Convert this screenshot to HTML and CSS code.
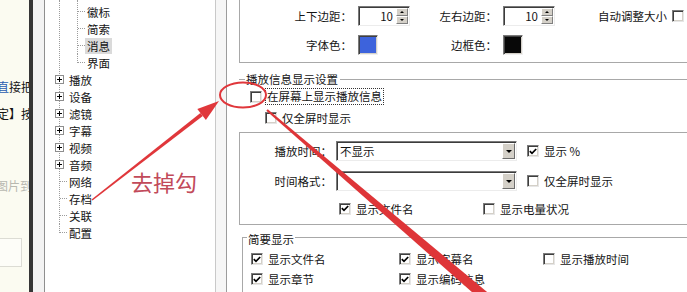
FILE: index.html
```html
<!DOCTYPE html>
<html>
    <head>
        <meta charset="utf-8">
        <title>播放信息显示设置</title>
        <link rel="stylesheet" href="styles.css">
    </head>
    <body>
        <div class="screen">
            <div class="doc-strip">
                <div class="doc-line"><span class="doc-blue">直</span>接把</div>
                <div class="doc-line">定】按</div>
                <div class="doc-line doc-faint">图片到</div>
                <div class="doc-input"></div>
            </div>
            <div class="dark-bar"></div>
            <div class="gutter"></div>

            <div class="tree">
                <div class="branch">
                    <div class="children">
                        <div class="tree-row"><span class="twig"></span><span class="node-label">徽标</span></div>
                        <div class="tree-row"><span class="twig"></span><span class="node-label">简索</span></div>
                        <div class="tree-row"><span class="twig"></span><span class="node-label selected">消息</span></div>
                    </div>
                    <div class="tree-row child is-last"><span class="twig"></span><span class="node-label">界面</span></div>
                    <div class="tree-row"><span class="plus"></span><span class="node-label">播放</span></div>
                    <div class="tree-row"><span class="plus"></span><span class="node-label">设备</span></div>
                    <div class="tree-row"><span class="plus"></span><span class="node-label">滤镜</span></div>
                    <div class="tree-row"><span class="plus"></span><span class="node-label">字幕</span></div>
                    <div class="tree-row"><span class="plus"></span><span class="node-label">视频</span></div>
                    <div class="tree-row"><span class="plus"></span><span class="node-label">音频</span></div>
                    <div class="tree-row"><span class="twig"></span><span class="node-label">网络</span></div>
                    <div class="tree-row"><span class="twig"></span><span class="node-label">存档</span></div>
                    <div class="tree-row"><span class="twig"></span><span class="node-label">关联</span></div>
                </div>
                <div class="tree-row top is-last"><span class="twig"></span><span class="node-label">配置</span></div>
            </div>

            <div class="splitter"></div>

            <div class="options">
                <div class="group group-margins">
                    <div class="margin-grid">
                        <span class="field-label">上下边距：</span>
                        <div class="spin">
                            <span class="spin-value">10</span>
                            <span class="spin-buttons"><span class="spin-up"></span><span class="spin-down"></span></span>
                        </div>
                        <span class="field-label">左右边距：</span>
                        <div class="spin">
                            <span class="spin-value">10</span>
                            <span class="spin-buttons"><span class="spin-up"></span><span class="spin-down"></span></span>
                        </div>
                        <div class="auto-size">自动调整大小<span class="check"></span></div>
                        <span class="field-label">字体色：</span>
                        <span class="swatch swatch-blue"></span>
                        <span class="field-label">边框色：</span>
                        <span class="swatch swatch-black"></span>
                    </div>
                </div>

                <div class="section-head">
                    <span class="head-rule short"></span>
                    <span class="head-text">播放信息显示设置</span>
                    <span class="head-rule"></span>
                </div>
                <div class="check-row show-info">
                    <span class="check"></span>
                    <span class="focus-label">在屏幕上显示播放信息</span>
                </div>
                <div class="check-row only-full">
                    <span class="check"></span>
                    <span class="check-text">仅全屏时显示</span>
                </div>

                <div class="frame">
                    <div class="combo-row">
                        <span class="combo-label">播放时间：</span>
                        <div class="combo"><span class="combo-text">不显示</span><span class="combo-button"></span></div>
                        <span class="check checked"><svg width="8" height="7" viewBox="0 0 8 7"><path d="M0.8 3.2 L3 5.4 L7.2 1" fill="none" stroke="#000" stroke-width="1.7"/></svg></span>
                        <span class="check-text">显示 %</span>
                    </div>
                    <div class="combo-row">
                        <span class="combo-label">时间格式：</span>
                        <div class="combo"><span class="combo-text"></span><span class="combo-button"></span></div>
                        <span class="check"></span>
                        <span class="check-text">仅全屏时显示</span>
                    </div>
                    <div class="file-row">
                        <div class="check-item file-name">
                            <span class="check checked"><svg width="8" height="7" viewBox="0 0 8 7"><path d="M0.8 3.2 L3 5.4 L7.2 1" fill="none" stroke="#000" stroke-width="1.7"/></svg></span>
                            <span class="check-text">显示文件名</span>
                        </div>
                        <div class="check-item">
                            <span class="check"></span>
                            <span class="check-text">显示电量状况</span>
                        </div>
                    </div>
                </div>

                <div class="group summary">
                    <div class="group-title">简要显示</div>
                    <div class="summary-grid">
                        <div class="check-item">
                            <span class="check checked"><svg width="8" height="7" viewBox="0 0 8 7"><path d="M0.8 3.2 L3 5.4 L7.2 1" fill="none" stroke="#000" stroke-width="1.7"/></svg></span>
                            <span class="check-text">显示文件名</span>
                        </div>
                        <div class="check-item">
                            <span class="check checked"><svg width="8" height="7" viewBox="0 0 8 7"><path d="M0.8 3.2 L3 5.4 L7.2 1" fill="none" stroke="#000" stroke-width="1.7"/></svg></span>
                            <span class="check-text">显示字幕名</span>
                        </div>
                        <div class="check-item">
                            <span class="check"></span>
                            <span class="check-text">显示播放时间</span>
                        </div>
                        <div class="check-item">
                            <span class="check checked"><svg width="8" height="7" viewBox="0 0 8 7"><path d="M0.8 3.2 L3 5.4 L7.2 1" fill="none" stroke="#000" stroke-width="1.7"/></svg></span>
                            <span class="check-text">显示章节</span>
                        </div>
                        <div class="check-item">
                            <span class="check checked"><svg width="8" height="7" viewBox="0 0 8 7"><path d="M0.8 3.2 L3 5.4 L7.2 1" fill="none" stroke="#000" stroke-width="1.7"/></svg></span>
                            <span class="check-text">显示编码信息</span>
                        </div>
                    </div>
                </div>
            </div>

            <!-- red hand-drawn marks over the screenshot -->
            <svg class="marks" width="687" height="292" viewBox="0 0 687 292">
                <ellipse cx="243" cy="95" rx="23" ry="12.5" fill="none" stroke="#e0373b" stroke-width="2"/>
                <polygon points="92.5,200.6 91.5,199.4 200.4,112.9 202.8,116.1" fill="#e0373b"/>
                <polygon points="219,101 197.3,109 205.9,120" fill="#e0373b"/>
                <polygon points="266.3,110.8 267.7,109.2 487.3,292.2 480.7,299.8" fill="#de3538"/>
                <text class="mark-text" x="131" y="191">去掉勾</text>
            </svg>
        </div>
    </body>
</html>
```

FILE: styles.css
```css
body {
    margin: 0;
    font-family: "Noto Sans CJK SC", "Noto Sans", sans-serif;
    font-size: 11.5px;
    color: #141414;
    background-color: #fff;
}

.screen {
    position: relative;
    display: flex;
    width: 687px;
    height: 292px;
    overflow: hidden;
}

/* document behind the dialog */
.doc-strip {
    flex: none;
    width: 29px;
    padding-top: 73px;
    box-sizing: border-box;
    background-color: #fbfbf1;
    overflow: hidden;
    font-size: 12px;
}

.doc-line {
    white-space: nowrap;
    line-height: 27px;
    margin-left: -3px;
}

.doc-blue {
    color: #2a5db0;
}

.doc-faint {
    margin-top: 45px;
    margin-left: -4px;
    color: #b8b8b0;
}

.doc-input {
    width: 21px;
    height: 27px;
    margin: 39px 0 0 -1px;
    border: 1px solid #dcdcd4;
    background-color: #fdfdf8;
}

.dark-bar {
    flex: none;
    width: 4px;
    background-color: #363636;
}

.gutter {
    flex: none;
    width: 11px;
    background-color: #f3f3f3;
}

/* settings tree */
.tree {
    flex: none;
    width: 172px;
    box-sizing: border-box;
    border-left: 1px solid #8f8f8f;
    border-right: 1px solid #c9c9c9;
    background-color: #fff;
    line-height: 17px;
}

.branch {
    margin-left: 14px;
    border-left: 1px dotted #9c9c9c;
}

.children {
    margin-left: 17px;
    padding-top: 3px;
    border-left: 1px dotted #9c9c9c;
}

.tree-row {
    position: relative;
    display: flex;
    align-items: center;
    height: 17px;
}

.tree-row.child {
    margin-left: 18px;
}

.tree-row.top {
    margin-left: 15px;
}

.tree-row.is-last::before {
    content: '';
    position: absolute;
    left: -1px;
    top: 0;
    height: 9px;
    border-left: 1px dotted #9c9c9c;
}

.twig {
    width: 7px;
    border-top: 1px dotted #9c9c9c;
}

.plus {
    width: 9px;
    height: 9px;
    margin-left: -5px;
    margin-right: 3px;
    box-sizing: border-box;
    border: 1px solid #8e8e8e;
    background: linear-gradient(#000, #000) center / 5px 1px no-repeat,
                linear-gradient(#000, #000) center / 1px 5px no-repeat,
                #fff;
}

.node-label {
    padding: 0 2px;
    line-height: 16px;
}

.node-label.selected {
    background-color: #dadada;
}

.splitter {
    flex: none;
    width: 10px;
    background-color: #f6f6f6;
}

/* option pages */
.options {
    flex: 1;
    min-width: 0;
    border-left: 1px solid #9c9c9c;
    background-color: #fff;
    overflow: hidden;
}

.group {
    border: 1px solid #a8a8a8;
    box-sizing: border-box;
}

.group-margins {
    height: 73px;
    margin: -10px -12px 0 12px;
    padding-top: 15px;
}

.margin-grid {
    display: grid;
    grid-template-columns: 112px 52px 81px 52px auto;
    grid-template-rows: 20px 20px;
    column-gap: 6px;
    row-gap: 9px;
    align-items: center;
}

.field-label {
    text-align: right;
}

.spin {
    display: flex;
    height: 20px;
    box-sizing: border-box;
    border: 1px solid;
    border-color: #7a7a7a #ececec #ececec #7a7a7a;
    box-shadow: inset 1px 1px 0 #3c3c3c;
    background-color: #fff;
}

.spin-value {
    flex: 1;
    text-align: right;
    padding-right: 3px;
    line-height: 18px;
}

.spin-buttons {
    display: flex;
    flex-direction: column;
    width: 12px;
    margin: 1px 1px 1px 0;
}

.spin-up,
.spin-down {
    flex: 1;
    display: flex;
    align-items: center;
    justify-content: center;
    box-sizing: border-box;
    border: 1px solid;
    border-color: #fff #808080 #808080 #fff;
    background-color: #d4d0c8;
}

.spin-up::after {
    content: '';
    border-left: 2px solid transparent;
    border-right: 2px solid transparent;
    border-bottom: 2px solid #000;
}

.spin-down::after {
    content: '';
    border-left: 2px solid transparent;
    border-right: 2px solid transparent;
    border-top: 2px solid #000;
}

.auto-size {
    display: flex;
    align-items: center;
    gap: 5px;
    padding-left: 37px;
    white-space: nowrap;
}

.swatch {
    width: 20px;
    height: 20px;
    box-sizing: border-box;
    border: 1px solid;
    border-color: #7a7a7a #f0f0f0 #f0f0f0 #7a7a7a;
    box-shadow: inset 1px 1px 0 #404040, inset -1px -1px 0 #d4d0c8;
}

.swatch-blue {
    background-color: #3d63dc;
}

.swatch-black {
    background-color: #080808;
}

.check {
    flex: none;
    display: inline-flex;
    align-items: center;
    justify-content: center;
    width: 12px;
    height: 12px;
    box-sizing: border-box;
    border: 1px solid;
    border-color: #7c7c7c #e6e6e6 #e6e6e6 #7c7c7c;
    box-shadow: inset 1px 1px 0 #3e3e3e, inset -1px -1px 0 #d4d0c8;
    background-color: #fff;
}

.check svg {
    display: block;
}

.check-text {
    margin-left: 5px;
    white-space: nowrap;
}

.section-head {
    display: flex;
    align-items: center;
    height: 16px;
    margin: 8px 0 0 12px;
}

.head-rule {
    flex: 1;
    border-top: 1px solid #a8a8a8;
}

.head-rule.short {
    flex: none;
    width: 6px;
}

.head-text {
    padding: 0 2px 0 1px;
    white-space: nowrap;
}

.check-row {
    display: flex;
    align-items: center;
    height: 17px;
}

.show-info {
    margin: 1px 0 0 23px;
}

.focus-label {
    margin-left: 3px;
    padding: 0 1px;
    border: 1px dotted #333;
    line-height: 15px;
}

.only-full {
    margin: 4px 0 0 38px;
}

.frame {
    height: 93px;
    margin: 6px -12px 0 12px;
    padding-top: 8px;
    box-sizing: border-box;
    border: 1px solid #a8a8a8;
}

.combo-row {
    display: flex;
    align-items: center;
    height: 20px;
    margin-bottom: 10px;
}

.combo-label {
    width: 92px;
    text-align: right;
}

.combo {
    display: flex;
    width: 181px;
    height: 20px;
    margin: 0 10px 0 4px;
    box-sizing: border-box;
    border: 1px solid;
    border-color: #7a7a7a #ececec #ececec #7a7a7a;
    box-shadow: inset 1px 1px 0 #3c3c3c;
    background-color: #fff;
}

.combo-text {
    flex: 1;
    padding-left: 3px;
    line-height: 18px;
}

.combo-button {
    display: flex;
    align-items: center;
    justify-content: center;
    width: 13px;
    margin: 1px 1px 1px 0;
    box-sizing: border-box;
    border: 1px solid;
    border-color: #fff #6c6c6c #6c6c6c #fff;
    background-color: #d4d0c8;
}

.combo-button::after {
    content: '';
    border-left: 3px solid transparent;
    border-right: 3px solid transparent;
    border-top: 3px solid #000;
}

.file-row {
    display: flex;
    height: 17px;
    margin: -1px 0 0 99px;
}

.check-item {
    display: flex;
    align-items: center;
}

.file-name {
    width: 144px;
}

.summary {
    display: flex;
    flex-direction: column;
    height: 80px;
    margin: 12px -12px 0 15px;
}

.group-title {
    align-self: flex-start;
    margin: -6px 0 0 4px;
    padding: 0 1px;
    line-height: 14px;
    background-color: #fff;
}

.summary-grid {
    display: grid;
    grid-template-columns: 148px 144px auto;
    grid-auto-rows: 20px;
    margin-top: 3px;
    padding-left: 8px;
}

/* annotation layer */
.marks {
    position: absolute;
    left: 0;
    top: 0;
    pointer-events: none;
}

.mark-text {
    font-family: "Noto Sans CJK SC", sans-serif;
    font-size: 22px;
    fill: #c24a5a;
}
```
